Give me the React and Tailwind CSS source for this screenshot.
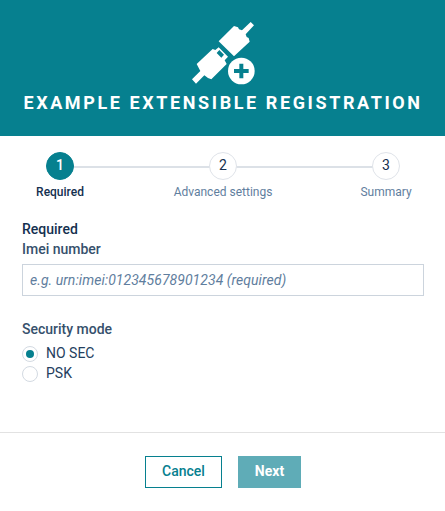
const steps = ["Required", "Advanced settings", "Summary"];

function ConnectorIcon() {
  return (
    <svg className="ml-px" width="66" height="65" viewBox="30 30 198 195" fill="#fff" aria-hidden="true">
      <path d="M212 36 222 46 197 73 200 81 206 84 209 95 162 139 116 94 162 48 174 52 177 58 186 61Z" />
      <path
        fillRule="evenodd"
        d="M98 117 106 120 116 112 144 140 134 151 140 162 94 208 84 204 73 196 48 221 36 208 61 183 50 162ZM118 120 110 129 124 143 132 134Z"
      />
      <circle cx="184" cy="183" r="40" />
      <path d="M178 161h12v16h16v12h-16v16h-12v-16h-16v-12h16z" fill="#06808f" />
    </svg>
  );
}

function Stepper() {
  return (
    <ol className="relative flex h-16 justify-between pl-[46px] pr-[45px] pt-4">
      <li aria-hidden="true" className="absolute left-[60px] right-[60px] top-[30px] h-0.5 bg-[#dce1e7]" />
      {steps.map((label, i) => (
        <li key={label} className="relative flex w-7 flex-col items-center">
          <span
            className={
              "flex size-7 shrink-0 items-center justify-center rounded-full border pb-0.5 text-sm " +
              (i === 0
                ? "border-[#06808f] bg-[#06808f] font-medium text-white"
                : "border-[#dfe3e9] bg-white text-[#14304f]")
            }
          >
            {i + 1}
          </span>
          <span
            className={
              "mt-1 whitespace-nowrap text-xs leading-4 " +
              (i === 0 ? "font-medium text-[#14304f]" : "text-[#5f7e9e]")
            }
          >
            {label}
          </span>
        </li>
      ))}
    </ol>
  );
}

function Radio({ label, checked }) {
  return (
    <label className="flex h-5 items-center gap-2 text-sm text-[#24405e]">
      <span className="mt-0.5 flex size-4 items-center justify-center rounded-full border border-[#d3dae2]">
        {checked && <span className="size-2 rounded-full bg-[#06808f]" />}
      </span>
      {label}
    </label>
  );
}

export default function App() {
  return (
    <div className="flex h-[511px] w-[445px] flex-col bg-white font-['Roboto',sans-serif] text-[#14304f]">
      <header className="flex h-[136px] shrink-0 flex-col items-center bg-[#06808f] pt-5 text-white">
        <ConnectorIcon />
        <h1 className="mt-[5px] whitespace-nowrap pl-px text-lg font-bold leading-[26px] tracking-[2.6px]">
          EXAMPLE EXTENSIBLE REGISTRATION
        </h1>
      </header>
      <Stepper />
      <main className="flex h-[232px] flex-col px-[22px] pt-[19px] text-sm leading-5">
        <h2 className="font-medium">Required</h2>
        <label className="font-medium text-[#36506c]">Imei number</label>
        <input
          className="mt-[5px] h-8 w-[402px] shrink-0 border border-[#ccd4dd] px-[7px] text-sm italic tracking-[0.05px] outline-none placeholder:text-[#5f7e9e]"
          placeholder="e.g. urn:imei:012345678901234 (required)"
        />
        <div className="mt-[23px] font-medium text-[#36506c]">Security mode</div>
        <div className="mt-1">
          <Radio label="NO SEC" checked />
          <Radio label="PSK" />
        </div>
      </main>
      <footer className="flex flex-1 items-start justify-center gap-4 border-t border-[#e2e2e2] pl-px pt-[23px] text-sm">
        <button className="h-8 w-[77px] border border-[#06808f] pb-0.5 font-medium text-[#06808f]">Cancel</button>
        <button className="h-8 w-[63px] bg-[#5facb7] pb-0.5 font-bold text-white">Next</button>
      </footer>
    </div>
  );
}
